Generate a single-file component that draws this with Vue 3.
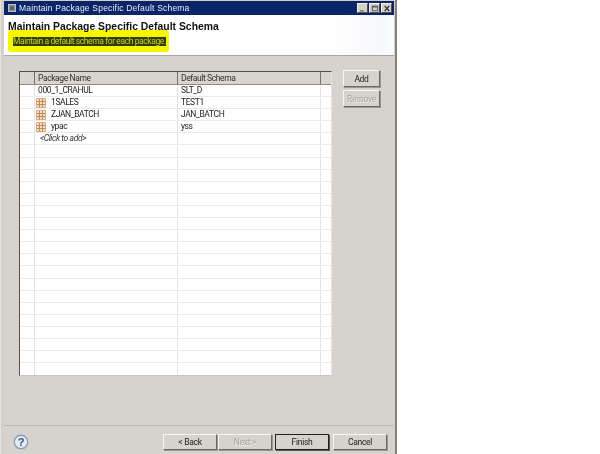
<script setup>
const packages = [
  { name: '000_1_CRAHUL', schema: 'SLT_D', icon: false },
  { name: '1SALES', schema: 'TEST1', icon: true },
  { name: 'ZJAN_BATCH', schema: 'JAN_BATCH', icon: true },
  { name: 'ypac', schema: 'yss', icon: true },
]
const emptyRows = Array.from({ length: 19 }, (_, i) => i)
</script>

<template>
  <div class="page">
    <div class="window">
      <div class="titlebar">
        <svg class="appicon" width="8" height="8" viewBox="0 0 8 8">
          <rect x="0.5" y="0.5" width="7" height="7" fill="#8a929c" stroke="#b9bec6" />
          <rect x="2" y="2" width="4" height="4" fill="#5a6576" />
        </svg>
        <span class="titletext">Maintain Package Specific Default Schema</span>
        <div class="winbtns">
          <div class="winbtn"><svg viewBox="0 0 10 9"><path d="M1 7.5h5" stroke="#666" stroke-width="1.5" /></svg></div>
          <div class="winbtn"><svg viewBox="0 0 10 9"><path d="M1.5 1.5h7v6h-7z M1.5 2.5h7" fill="none" stroke="#333" /></svg></div>
          <div class="winbtn"><svg viewBox="0 0 10 9"><path d="M2 1l6 7M8 1l-6 7" stroke="#222" stroke-width="1.5" /></svg></div>
        </div>
      </div>

      <header class="head">
        <h1>Maintain Package Specific Default Schema</h1>
        <div class="marker"><span class="desc">Maintain a default schema for each package.</span></div>
      </header>

      <main class="body">
        <div class="table">
          <div class="row hdr">
            <div class="c c0"></div>
            <div class="c c1">Package Name</div>
            <div class="c c2">Default Schema</div>
            <div class="c c3"></div>
          </div>
          <div v-for="p in packages" :key="p.name" class="row">
            <div class="c c0"></div>
            <div class="c c1">
              <svg v-if="p.icon" class="pkg" width="10" height="10" viewBox="0 0 10 10">
                <rect x="0.5" y="0.5" width="9" height="9" fill="#f3dfc4" />
                <path d="M0.5 3.5h9M0.5 6.5h9M3.5 0.5v9M6.5 0.5v9" stroke="#c08a58" stroke-width="1" fill="none" />
                <rect x="0.5" y="0.5" width="9" height="9" fill="none" stroke="#cf9f72" stroke-width="0.8" />
              </svg>
              <span :class="{ indented: p.icon }">{{ p.name }}</span>
            </div>
            <div class="c c2">{{ p.schema }}</div>
            <div class="c c3"></div>
          </div>
          <div class="row">
            <div class="c c0"></div>
            <div class="c c1 add"><em>&lt;Click to add&gt;</em></div>
            <div class="c c2"></div>
            <div class="c c3"></div>
          </div>
          <div v-for="i in emptyRows" :key="i" class="row">
            <div class="c c0"></div>
            <div class="c c1"></div>
            <div class="c c2"></div>
            <div class="c c3"></div>
          </div>
        </div>
        <div class="side">
          <button class="btn side-btn">Add</button>
          <button class="btn side-btn" disabled>Remove</button>
        </div>
      </main>

      <footer class="foot">
        <svg class="help" width="16" height="16" viewBox="0 0 16 16">
          <circle cx="8" cy="8" r="6.8" fill="#e6ebf3" stroke="#8a9cbc" stroke-width="1.4" />
          <text x="8" y="12" text-anchor="middle" class="q">?</text>
        </svg>
        <div class="navs">
          <button class="btn nav">&lt; Back</button>
          <button class="btn nav" disabled>Next &gt;</button>
          <button class="btn nav finish">Finish</button>
          <button class="btn nav cancel">Cancel</button>
        </div>
      </footer>
    </div>
  </div>
</template>

<style>
html, body { margin: 0; background: #fff; }
</style>

<style scoped>
.page {
  width: 600px;
  height: 454px;
  overflow: hidden;
  background: #fff;
  font-family: Roboto, "Liberation Sans", Arial, sans-serif;
  font-size: 8.5px;
  letter-spacing: -0.4px;
  color: #222;
}
.window {
  width: 397px;
  height: 454px;
  box-sizing: border-box;
  padding: 1px 1px 0 3px;
  background: #d4d0c8;
  border-left: 1px solid #e6e4df;
  border-right: 2px solid #85827c;
  display: flex;
  flex-direction: column;
  filter: blur(0.3px);
}
.titlebar {
  height: 14px;
  flex: none;
  display: flex;
  align-items: center;
  padding: 0 2px 0 4px;
  background: #0a246a;
  color: #e8ecf4;
}
.appicon { flex: none; margin-right: 3px; }
.titletext {
  font-family: "Liberation Sans", Arial, sans-serif;
  font-size: 8.5px;
  letter-spacing: 0.2px;
  white-space: nowrap;
  flex: 1;
}
.winbtns { display: flex; gap: 1px; }
.winbtn {
  width: 11px;
  height: 10px;
  background: #d4d0c8;
  border: 1px solid;
  border-color: #f4f3f0 #55524c #55524c #f4f3f0;
  box-sizing: border-box;
  display: flex;
  align-items: center;
  justify-content: center;
}
.winbtn svg { width: 8px; height: 7px; }
.head {
  height: 40px;
  flex: none;
  background: linear-gradient(90deg, #fff 84%, #f7f8fd 96%, #fbfcfe);
  border-bottom: 1px solid #a8a6a0;
  padding-left: 4px;
}
.head h1 {
  position: relative;
  z-index: 1;
  margin: 0;
  padding-top: 6px;
  font-family: "Liberation Sans", Arial, sans-serif;
  font-size: 10.4px;
  line-height: 11px;
  font-weight: 700;
  letter-spacing: 0;
  color: #111;
  white-space: nowrap;
}
.marker {
  display: inline-block;
  margin: -2px 0 0 0;
  padding: 7px 3px 6px 5px;
  background: #f6f600;
  border-radius: 3px;
}
.desc {
  display: block;
  background: #303c10;
  color: #c4d21c;
  font-size: 8.5px;
  line-height: 9px;
  white-space: nowrap;
}
.body {
  flex: 1;
  display: flex;
  align-items: flex-start;
  padding: 15px 0 0 15px;
  background: #d6d3cd;
}
.table {
  width: 313px;
  flex: none;
  background: #fff;
  border-top: 1px solid #55524c;
  border-left: 1px solid #55524c;
  border-bottom: 1px solid #c8c5be;
  border-right: 1px solid #e4e2dc;
  box-sizing: border-box;
}
.row { display: flex; height: 12.1px; border-bottom: 1px solid #eceae6; box-sizing: border-box; }
.row:last-child { border-bottom: none; }
.hdr {
  height: 13px;
  background: #d8d5cf;
  border-bottom: 1px solid #8f8c86;
}
.c {
  flex: none;
  box-sizing: border-box;
  border-right: 1px solid #e4e2dd;
  line-height: 11px;
  padding-left: 3px;
  display: flex;
  align-items: center;
  white-space: nowrap;
  overflow: hidden;
}
.hdr .c { border-right: 1px solid #75726c; color: #33312d; }
.c0 { width: 15px; padding: 0; }
.c1 { width: 143px; position: relative; }
.c2 { width: 143px; }
.c3 { flex: 1; border-right: none; }
.hdr .c3 { border-right: none; }
.pkg { position: absolute; left: 1px; top: 0.5px; }
.indented { padding-left: 13px; }
.add { padding-left: 5px; color: #333; }
.side {
  display: flex;
  flex-direction: column;
  gap: 3px;
  margin: -1px 0 0 11px;
}
.btn {
  font-family: inherit;
  font-size: 8.5px;
  letter-spacing: -0.3px;
  color: #222;
  background: #d6d3cd;
  border: 1px solid;
  border-color: #f7f6f3 #6d6a64 #6d6a64 #f7f6f3;
  box-shadow: 1px 1px 0 #9a9790;
  padding: 0;
  margin: 0;
  box-sizing: border-box;
}
.btn:disabled { color: #a5a39d; text-shadow: 0.5px 0.5px 0 #f3f2ee; }
.side-btn { width: 37px; height: 17px; }
.foot {
  height: 29px;
  flex: none;
  display: flex;
  align-items: flex-start;
  justify-content: space-between;
  box-sizing: border-box;
  padding: 8px 7px 0 9px;
  background: #d6d3cd;
  border-top: 1px solid #bcb9b2;
}
.q { font: 700 11px "Liberation Sans", Arial, sans-serif; fill: #2f4f8c; }
.navs { display: flex; }
.nav { width: 54px; height: 16px; margin-left: 1px; }
.finish { margin-left: 3px; border-color: #222; box-shadow: 1px 1px 0 #555; }
.cancel { margin-left: 4px; }
</style>
